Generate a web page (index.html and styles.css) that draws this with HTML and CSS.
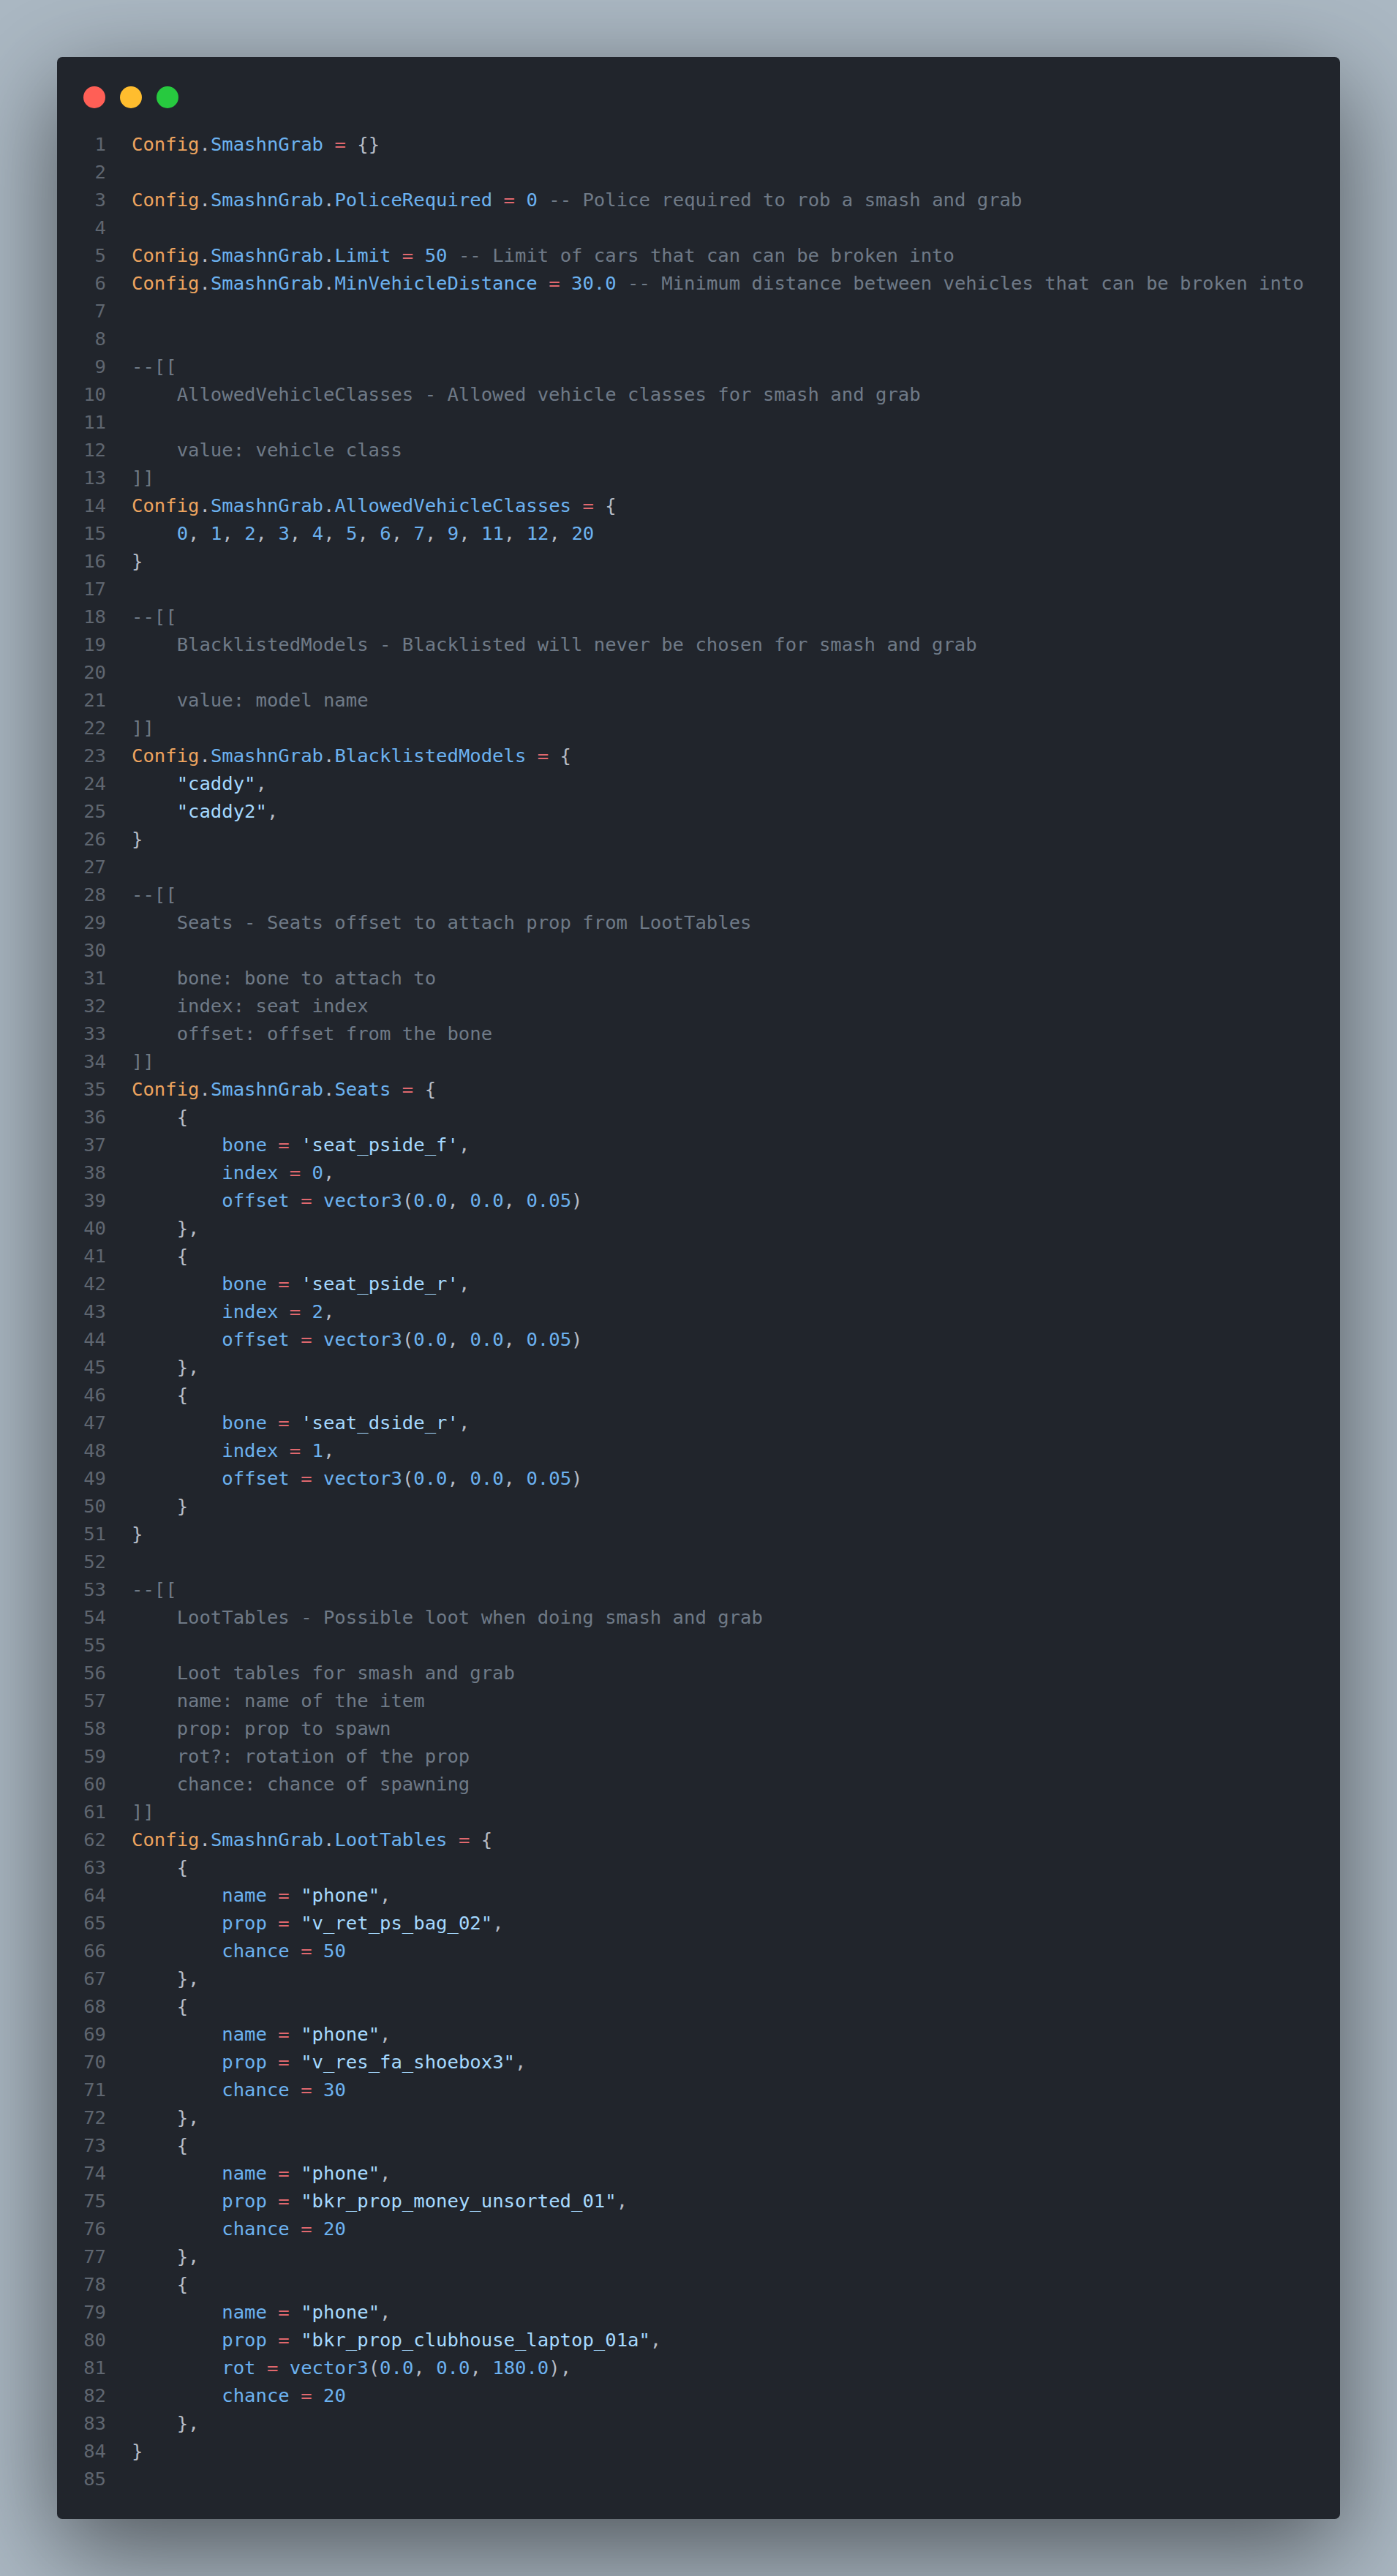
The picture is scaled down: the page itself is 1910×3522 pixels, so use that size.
FILE: index.html
```html
<!DOCTYPE html>
<html lang="en">
<head>
<meta charset="utf-8">
<title>Config.SmashnGrab</title>
<link rel="stylesheet" href="styles.css">
</head>
<body>
<main class="window">
<div class="dots"><span class="dot red"></span><span class="dot yellow"></span><span class="dot green"></span></div>
<div class="code">
<div class="l"><span class="ln">1</span><code><b>Config</b><i>.</i><u>SmashnGrab</u> <s>=</s> <i>{}</i></code></div>
<div class="l"><span class="ln">2</span><code></code></div>
<div class="l"><span class="ln">3</span><code><b>Config</b><i>.</i><u>SmashnGrab</u><i>.</i><u>PoliceRequired</u> <s>=</s> <u>0</u> <em>-- Police required to rob a smash and grab</em></code></div>
<div class="l"><span class="ln">4</span><code></code></div>
<div class="l"><span class="ln">5</span><code><b>Config</b><i>.</i><u>SmashnGrab</u><i>.</i><u>Limit</u> <s>=</s> <u>50</u> <em>-- Limit of cars that can can be broken into</em></code></div>
<div class="l"><span class="ln">6</span><code><b>Config</b><i>.</i><u>SmashnGrab</u><i>.</i><u>MinVehicleDistance</u> <s>=</s> <u>30.0</u> <em>-- Minimum distance between vehicles that can be broken into</em></code></div>
<div class="l"><span class="ln">7</span><code></code></div>
<div class="l"><span class="ln">8</span><code></code></div>
<div class="l"><span class="ln">9</span><code><em>--[[</em></code></div>
<div class="l"><span class="ln">10</span><code><em>    AllowedVehicleClasses - Allowed vehicle classes for smash and grab</em></code></div>
<div class="l"><span class="ln">11</span><code></code></div>
<div class="l"><span class="ln">12</span><code><em>    value: vehicle class</em></code></div>
<div class="l"><span class="ln">13</span><code><em>]]</em></code></div>
<div class="l"><span class="ln">14</span><code><b>Config</b><i>.</i><u>SmashnGrab</u><i>.</i><u>AllowedVehicleClasses</u> <s>=</s> <i>{</i></code></div>
<div class="l"><span class="ln">15</span><code>    <u>0</u><i>,</i> <u>1</u><i>,</i> <u>2</u><i>,</i> <u>3</u><i>,</i> <u>4</u><i>,</i> <u>5</u><i>,</i> <u>6</u><i>,</i> <u>7</u><i>,</i> <u>9</u><i>,</i> <u>11</u><i>,</i> <u>12</u><i>,</i> <u>20</u></code></div>
<div class="l"><span class="ln">16</span><code><i>}</i></code></div>
<div class="l"><span class="ln">17</span><code></code></div>
<div class="l"><span class="ln">18</span><code><em>--[[</em></code></div>
<div class="l"><span class="ln">19</span><code><em>    BlacklistedModels - Blacklisted will never be chosen for smash and grab</em></code></div>
<div class="l"><span class="ln">20</span><code></code></div>
<div class="l"><span class="ln">21</span><code><em>    value: model name</em></code></div>
<div class="l"><span class="ln">22</span><code><em>]]</em></code></div>
<div class="l"><span class="ln">23</span><code><b>Config</b><i>.</i><u>SmashnGrab</u><i>.</i><u>BlacklistedModels</u> <s>=</s> <i>{</i></code></div>
<div class="l"><span class="ln">24</span><code>    <q>"caddy"</q><i>,</i></code></div>
<div class="l"><span class="ln">25</span><code>    <q>"caddy2"</q><i>,</i></code></div>
<div class="l"><span class="ln">26</span><code><i>}</i></code></div>
<div class="l"><span class="ln">27</span><code></code></div>
<div class="l"><span class="ln">28</span><code><em>--[[</em></code></div>
<div class="l"><span class="ln">29</span><code><em>    Seats - Seats offset to attach prop from LootTables</em></code></div>
<div class="l"><span class="ln">30</span><code></code></div>
<div class="l"><span class="ln">31</span><code><em>    bone: bone to attach to</em></code></div>
<div class="l"><span class="ln">32</span><code><em>    index: seat index</em></code></div>
<div class="l"><span class="ln">33</span><code><em>    offset: offset from the bone</em></code></div>
<div class="l"><span class="ln">34</span><code><em>]]</em></code></div>
<div class="l"><span class="ln">35</span><code><b>Config</b><i>.</i><u>SmashnGrab</u><i>.</i><u>Seats</u> <s>=</s> <i>{</i></code></div>
<div class="l"><span class="ln">36</span><code>    <i>{</i></code></div>
<div class="l"><span class="ln">37</span><code>        <u>bone</u> <s>=</s> <q>'seat_pside_f'</q><i>,</i></code></div>
<div class="l"><span class="ln">38</span><code>        <u>index</u> <s>=</s> <u>0</u><i>,</i></code></div>
<div class="l"><span class="ln">39</span><code>        <u>offset</u> <s>=</s> <u>vector3</u><i>(</i><u>0.0</u><i>,</i> <u>0.0</u><i>,</i> <u>0.05</u><i>)</i></code></div>
<div class="l"><span class="ln">40</span><code>    <i>},</i></code></div>
<div class="l"><span class="ln">41</span><code>    <i>{</i></code></div>
<div class="l"><span class="ln">42</span><code>        <u>bone</u> <s>=</s> <q>'seat_pside_r'</q><i>,</i></code></div>
<div class="l"><span class="ln">43</span><code>        <u>index</u> <s>=</s> <u>2</u><i>,</i></code></div>
<div class="l"><span class="ln">44</span><code>        <u>offset</u> <s>=</s> <u>vector3</u><i>(</i><u>0.0</u><i>,</i> <u>0.0</u><i>,</i> <u>0.05</u><i>)</i></code></div>
<div class="l"><span class="ln">45</span><code>    <i>},</i></code></div>
<div class="l"><span class="ln">46</span><code>    <i>{</i></code></div>
<div class="l"><span class="ln">47</span><code>        <u>bone</u> <s>=</s> <q>'seat_dside_r'</q><i>,</i></code></div>
<div class="l"><span class="ln">48</span><code>        <u>index</u> <s>=</s> <u>1</u><i>,</i></code></div>
<div class="l"><span class="ln">49</span><code>        <u>offset</u> <s>=</s> <u>vector3</u><i>(</i><u>0.0</u><i>,</i> <u>0.0</u><i>,</i> <u>0.05</u><i>)</i></code></div>
<div class="l"><span class="ln">50</span><code>    <i>}</i></code></div>
<div class="l"><span class="ln">51</span><code><i>}</i></code></div>
<div class="l"><span class="ln">52</span><code></code></div>
<div class="l"><span class="ln">53</span><code><em>--[[</em></code></div>
<div class="l"><span class="ln">54</span><code><em>    LootTables - Possible loot when doing smash and grab</em></code></div>
<div class="l"><span class="ln">55</span><code></code></div>
<div class="l"><span class="ln">56</span><code><em>    Loot tables for smash and grab</em></code></div>
<div class="l"><span class="ln">57</span><code><em>    name: name of the item</em></code></div>
<div class="l"><span class="ln">58</span><code><em>    prop: prop to spawn</em></code></div>
<div class="l"><span class="ln">59</span><code><em>    rot?: rotation of the prop</em></code></div>
<div class="l"><span class="ln">60</span><code><em>    chance: chance of spawning</em></code></div>
<div class="l"><span class="ln">61</span><code><em>]]</em></code></div>
<div class="l"><span class="ln">62</span><code><b>Config</b><i>.</i><u>SmashnGrab</u><i>.</i><u>LootTables</u> <s>=</s> <i>{</i></code></div>
<div class="l"><span class="ln">63</span><code>    <i>{</i></code></div>
<div class="l"><span class="ln">64</span><code>        <u>name</u> <s>=</s> <q>"phone"</q><i>,</i></code></div>
<div class="l"><span class="ln">65</span><code>        <u>prop</u> <s>=</s> <q>"v_ret_ps_bag_02"</q><i>,</i></code></div>
<div class="l"><span class="ln">66</span><code>        <u>chance</u> <s>=</s> <u>50</u></code></div>
<div class="l"><span class="ln">67</span><code>    <i>},</i></code></div>
<div class="l"><span class="ln">68</span><code>    <i>{</i></code></div>
<div class="l"><span class="ln">69</span><code>        <u>name</u> <s>=</s> <q>"phone"</q><i>,</i></code></div>
<div class="l"><span class="ln">70</span><code>        <u>prop</u> <s>=</s> <q>"v_res_fa_shoebox3"</q><i>,</i></code></div>
<div class="l"><span class="ln">71</span><code>        <u>chance</u> <s>=</s> <u>30</u></code></div>
<div class="l"><span class="ln">72</span><code>    <i>},</i></code></div>
<div class="l"><span class="ln">73</span><code>    <i>{</i></code></div>
<div class="l"><span class="ln">74</span><code>        <u>name</u> <s>=</s> <q>"phone"</q><i>,</i></code></div>
<div class="l"><span class="ln">75</span><code>        <u>prop</u> <s>=</s> <q>"bkr_prop_money_unsorted_01"</q><i>,</i></code></div>
<div class="l"><span class="ln">76</span><code>        <u>chance</u> <s>=</s> <u>20</u></code></div>
<div class="l"><span class="ln">77</span><code>    <i>},</i></code></div>
<div class="l"><span class="ln">78</span><code>    <i>{</i></code></div>
<div class="l"><span class="ln">79</span><code>        <u>name</u> <s>=</s> <q>"phone"</q><i>,</i></code></div>
<div class="l"><span class="ln">80</span><code>        <u>prop</u> <s>=</s> <q>"bkr_prop_clubhouse_laptop_01a"</q><i>,</i></code></div>
<div class="l"><span class="ln">81</span><code>        <u>rot</u> <s>=</s> <u>vector3</u><i>(</i><u>0.0</u><i>,</i> <u>0.0</u><i>,</i> <u>180.0</u><i>),</i></code></div>
<div class="l"><span class="ln">82</span><code>        <u>chance</u> <s>=</s> <u>20</u></code></div>
<div class="l"><span class="ln">83</span><code>    <i>},</i></code></div>
<div class="l"><span class="ln">84</span><code><i>}</i></code></div>
<div class="l"><span class="ln">85</span><code></code></div>
</div>
</main>
</body>
</html>
```
FILE: styles.css
```css
html, body { margin: 0; padding: 0; }
body {
  background: #abb8c3;
  padding: 78px;
  height: 3522px;
  box-sizing: border-box;
  overflow: hidden;
}
.window {
  background: #21252c;
  border-radius: 7px;
  box-shadow: 0 40px 136px rgba(0, 0, 0, 0.55);
  padding: 40px 36px 36px;
  height: 3366px;
  box-sizing: border-box;
}
.dots { display: flex; gap: 20px; height: 30px; margin-bottom: 30px; }
.dot { width: 30px; height: 30px; border-radius: 50%; }
.red { background: #ff5f56; }
.yellow { background: #ffbd2e; }
.green { background: #27c93f; }
.code { font-family: "DejaVu Sans Mono", monospace; font-size: 25.6px; line-height: 38px; }
.l { display: flex; height: 38px; }
.ln { width: 31px; text-align: right; color: #5f6670; flex: none; margin-right: 35px; }
code { font: inherit; white-space: pre; color: #abb2bf; }
b { font-weight: normal; color: #eda45f; }
i { font-style: normal; color: #b6bcc6; }
u { text-decoration: none; color: #6cb2f0; }
s { text-decoration: none; color: #e0686e; }
em { font-style: normal; color: #6f7a87; }
q { quotes: none; color: #a5d9ff; }
```
